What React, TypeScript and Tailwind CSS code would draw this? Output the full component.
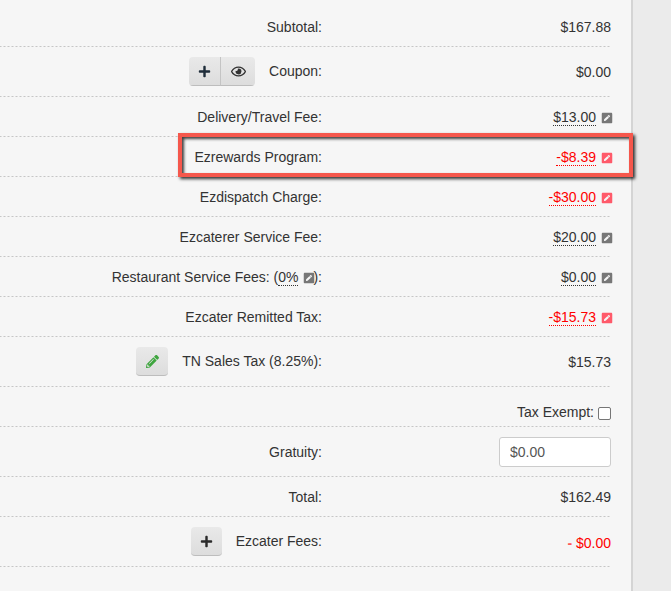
import type { ReactNode } from "react";
import { FaPencilAlt, FaPenSquare, FaPlus, FaRegEye } from "react-icons/fa";

const iconBtn =
  "flex items-center justify-center bg-gradient-to-b from-[#e9e9e9] to-[#dddddd] border-b border-[#bdbdbd] text-[#2e2e2e]";

const dots =
  "border-b border-transparent bg-[linear-gradient(to_right,#c6c6c6_50%,transparent_50%)] bg-[length:4px_1px] bg-bottom bg-repeat-x bg-origin-border";

const Row = ({
  h,
  label,
  value,
  left,
  labelClass = "",
  valueClass = "",
}: {
  h: string;
  label: ReactNode;
  value: ReactNode;
  left?: ReactNode;
  labelClass?: string;
  valueClass?: string;
}) => (
  <div className={`${h} ${dots} flex items-center w-[611px]`}>
    <div className={`w-[322px] flex items-center justify-end ${labelClass}`}>
      {left}
      <span>{label}</span>
    </div>
    <div className={`flex-1 flex items-center justify-end ${valueClass}`}>{value}</div>
  </div>
);

const Editable = ({ amount, red }: { amount: string; red?: boolean }) => (
  <span className={`flex items-center ${red ? "text-[#ff0000]" : ""}`}>
    <span className={`border-b border-dotted leading-[16px] ${red ? "border-[#ff0000]" : "border-[#333333]"}`}>
      {amount}
    </span>
    <FaPenSquare className={`ml-[5px] mr-[-2px] w-[12px] h-[12px] ${red ? "text-[#ff5a6a]" : "text-[#777777]"}`} />
  </span>
);

export default function App() {
  return (
    <div className="relative h-[591px] w-[671px] overflow-hidden bg-[#ebebeb] text-[14px] text-[#333333] font-['Liberation_Sans',Arial,sans-serif]">
      <div className="h-[591px] w-[633px] bg-[#f6f6f6] border-r-2 border-[#d4d4d4]">
        <Row h="h-[47px]" label="Subtotal:" value="$167.88" labelClass="pt-[8px]" valueClass="pt-[8px]" />
        <Row
          h="h-[50px]"
          label="Coupon:"
          value={<span className="pt-[2px]">$0.00</span>}
          left={
            <span className="flex mr-[14px] rounded-[4px] overflow-hidden">
              <span className={`${iconBtn} w-[32px] h-[29px] border-r border-r-[#c4c4c4]`}>
                <FaPlus className="w-[13px] h-[13px] text-[#1f2d3a]" />
              </span>
              <span className={`${iconBtn} w-[34px] h-[29px]`}>
                <FaRegEye className="w-[15px] h-[15px] text-[#333333]" />
              </span>
            </span>
          }
        />
        <Row h="h-[40px]" label="Delivery/Travel Fee:" value={<Editable amount="$13.00" />} labelClass="pt-[2px]" valueClass="pt-[2px]" />
        <Row h="h-[40px]" label="Ezrewards Program:" value={<Editable amount="-$8.39" red />} labelClass="pt-[2px]" valueClass="pt-[2px]" />
        <Row h="h-[40px]" label="Ezdispatch Charge:" value={<Editable amount="-$30.00" red />} labelClass="pt-[2px]" valueClass="pt-[2px]" />
        <Row h="h-[40px]" label="Ezcaterer Service Fee:" value={<Editable amount="$20.00" />} labelClass="pt-[2px]" valueClass="pt-[2px]" />
        <Row
          h="h-[40px]"
          label={
            <span className="flex items-center">
              Restaurant Service Fees: (
              <span className="border-b border-dotted border-[#333333] leading-[16px]">0%</span>
              <FaPenSquare className="ml-[5px] mr-[-2px] w-[12px] h-[12px] text-[#777777]" />
              ):
            </span>
          }
          value={<Editable amount="$0.00" />}
          labelClass="pt-[2px]"
          valueClass="pt-[2px]"
        />
        <Row h="h-[40px]" label="Ezcater Remitted Tax:" value={<Editable amount="-$15.73" red />} labelClass="pt-[2px]" valueClass="pt-[2px]" />
        <Row
          h="h-[50px]"
          label="TN Sales Tax (8.25%):"
          value={<span className="pt-[2px]">$15.73</span>}
          left={
            <span className={`${iconBtn} w-[32px] h-[29px] mr-[14px] rounded-[4px]`}>
              <FaPencilAlt className="w-[13px] h-[13px] text-[#3fa63f]" />
            </span>
          }
        />
        <Row
          h="h-[40px]"
          label=""
          valueClass="pt-[12px]"
          value={
            <span className="flex items-center">
              Tax Exempt:
              <input type="checkbox" readOnly className="appearance-none ml-[4px] mt-[1px] w-[13px] h-[13px] rounded-[2px] border border-[#767676] bg-white" />
            </span>
          }
        />
        <Row
          h="h-[50px]"
          label="Gratuity:"
          labelClass="pt-[2px]"
          value={
            <input
              readOnly
              value="$0.00"
              className="w-[112px] h-[30px] px-[10px] rounded-[3px] border border-[#cccccc] bg-white text-[#555555] outline-none"
            />
          }
        />
        <Row h="h-[40px]" label="Total:" value="$162.49" labelClass="pt-[2px]" valueClass="pt-[2px]" />
        <Row
          h="h-[50px]"
          label="Ezcater Fees:"
          valueClass="pt-[4px]"
          value={
            <span className="text-[#ff0000]">
              <span className="text-[#ff5a5a] font-bold">-</span> $0.00
            </span>
          }
          left={
            <span className={`${iconBtn} w-[31px] h-[29px] mr-[14px] rounded-[4px]`}>
              <FaPlus className="w-[13px] h-[13px] text-[#2a2a2a]" />
            </span>
          }
        />
      </div>
      {/* highlight box drawn over the Ezrewards row */}
      <div className="absolute left-[178px] top-[133px] w-[455px] h-[44px] border-[4px] border-[#f5574c] shadow-[2px_2px_3px_rgba(0,0,0,0.8),inset_2px_2px_3px_rgba(0,0,0,0.75)]" />
    </div>
  );
}
